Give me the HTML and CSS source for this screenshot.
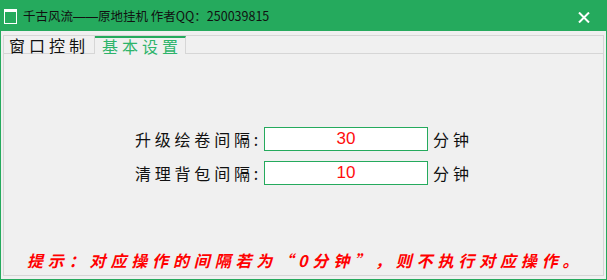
FILE: index.html
```html
<!DOCTYPE html>
<html lang="zh-CN">
<head>
<meta charset="utf-8">
<title>千古风流——原地挂机</title>
<link rel="stylesheet" href="styles.css">
</head>
<body>
<div class="window">
  <div class="titlebar">
    <svg class="app-icon" width="13" height="15" viewBox="0 0 13 15">
      <rect x="0.5" y="0.5" width="12" height="14" fill="none" stroke="#fff" stroke-width="1"/>
      <rect x="0" y="0" width="13" height="3" fill="#fff"/>
    </svg>
    <span class="title">千古风流<span class="dash">——</span>原地挂机 作者QQ：250039815</span>
    <svg class="close" width="12" height="11" viewBox="0 0 12 11">
      <path d="M1 0.5 L11 10.5 M11 0.5 L1 10.5" stroke="#fff" stroke-width="2"/>
    </svg>
  </div>
  <div class="tabs">
    <div class="tab-head">
      <div class="tab">窗口控制</div>
      <div class="tab active">基本设置</div>
      <div class="tab-fill"></div>
    </div>
    <div class="panel">
      <div class="form">
        <div class="row">
          <label class="label">升级绘卷间隔:</label>
          <div class="input">30</div>
          <span class="unit">分钟</span>
        </div>
        <div class="row">
          <label class="label">清理背包间隔:</label>
          <div class="input">10</div>
          <span class="unit">分钟</span>
        </div>
      </div>
      <div class="hint">提示：对应操作的间隔若为“0分钟”，则不执行对应操作。</div>
    </div>
  </div>
</div>
</body>
</html>
```
FILE: styles.css
```css
html, body {
  margin: 0;
  padding: 0;
}
body {
  width: 607px;
  height: 280px;
  overflow: hidden;
  font-family: "Noto Sans CJK SC", "Noto Sans", sans-serif;
}
.window {
  box-sizing: border-box;
  width: 607px;
  height: 280px;
  background: #f0f0f0;
  border: 1px solid #25aa5d;
  border-top: none;
  display: flex;
  flex-direction: column;
}
.titlebar {
  height: 31px;
  margin: 0 -1px;
  background: #25aa5d;
  display: flex;
  align-items: center;
  padding-left: 4px;
  flex-shrink: 0;
}
.app-icon {
  display: block;
  margin-top: 2px;
}
.title {
  margin-left: 6px;
  font-size: 12.5px;
  color: #111;
  line-height: 20px;
  margin-top: 1px;
  white-space: nowrap;
}
.dash {
  font-family: "Liberation Sans", Arial, sans-serif;
  font-size: 12.5px;
}
.close {
  display: block;
  margin-left: auto;
  margin-right: 17px;
  margin-top: 4px;
}
.tabs {
  flex: 1;
  margin: 4px 2px 3px 2px;
  border: 1px solid #d6d6d6;
  display: flex;
  flex-direction: column;
}
.tab-head {
  display: flex;
  height: 18px;
  flex-shrink: 0;
}
.tab {
  box-sizing: border-box;
  width: 91px;
  padding-left: 5px;
  font-size: 16px;
  letter-spacing: 4px;
  line-height: 18px;
  color: #111;
  border-bottom: 1px solid #d6d6d6;
  border-right: 1px solid #d6d6d6;
  white-space: nowrap;
}
.tab.active {
  color: #2db46a;
  border-top: 2px solid #25aa5d;
  border-bottom: none;
  line-height: 16px;
  padding-left: 7px;
}
.tab-fill {
  flex: 1;
  border-bottom: 1px solid #d6d6d6;
}
.panel {
  flex: 1;
  display: flex;
  flex-direction: column;
}
.form {
  margin-top: 73px;
  margin-left: 128px;
  display: flex;
  flex-direction: column;
  gap: 10px;
}
.row {
  display: flex;
  align-items: center;
  height: 24px;
}
.label {
  width: 130px;
  text-align: right;
  font-size: 16px;
  letter-spacing: 3.8px;
  color: #111;
  margin-right: 2px;
  white-space: nowrap;
}
.input {
  box-sizing: border-box;
  width: 164px;
  height: 24px;
  background: #fff;
  border: 1px solid #25aa5d;
  color: #ff0d0d;
  font-family: "Liberation Sans", Arial, sans-serif;
  font-size: 17px;
  line-height: 22px;
  text-align: center;
}
.unit {
  margin-left: 5px;
  font-size: 16px;
  letter-spacing: 4px;
  color: #111;
}
.hint {
  margin-top: 65px;
  padding-left: 23px;
  font-size: 16px;
  line-height: 20px;
  font-weight: bold;
  font-style: italic;
  letter-spacing: 4.85px;
  color: #ff0000;
  white-space: nowrap;
}
```
